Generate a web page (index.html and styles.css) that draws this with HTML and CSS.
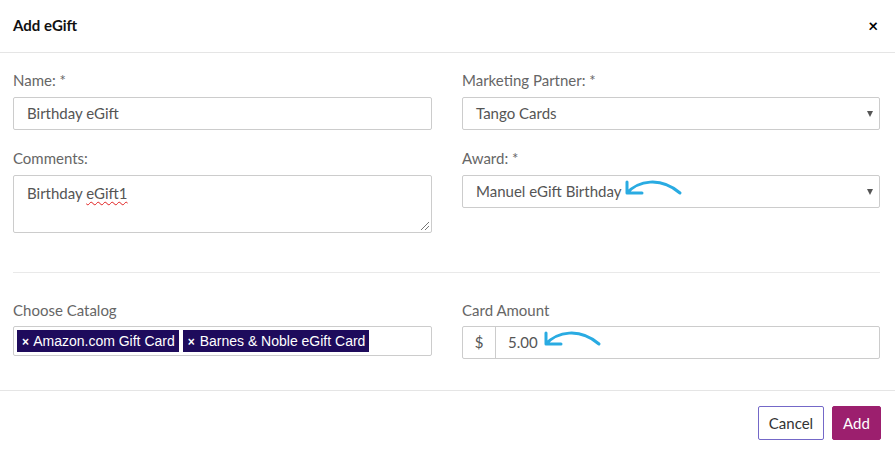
FILE: index.html
```html
<!DOCTYPE html>
<html lang="en">
<head>
  <meta charset="UTF-8" />
  <title>Add eGift</title>
  <link rel="stylesheet" href="styles.css">
</head>
<body>
  <div class="modal">
    <div class="modal-header">
      <h4>Add eGift</h4>
      <span class="close">&times;</span>
    </div>
    <div class="modal-body">
      <div class="grid">
        <div class="field">
          <label>Name: *</label>
          <div class="control">Birthday eGift</div>
        </div>
        <div class="field">
          <label>Marketing Partner: *</label>
          <div class="control select">Tango Cards</div>
        </div>
        <div class="field">
          <label>Comments:</label>
          <div class="control textarea">Birthday <span class="typo">eGift1</span></div>
        </div>
        <div class="field">
          <label>Award: *</label>
          <div class="control select">
            Manuel eGift Birthday
            <svg class="pointer award-pointer" width="60" height="22" viewBox="0 0 60 22">
              <path d="M3 4 V15 H18 M3 15 C14 3 36 -2 56 15" fill="none" stroke="#29abe2" stroke-width="3" stroke-linecap="round" stroke-linejoin="round"/>
            </svg>
          </div>
        </div>
      </div>

      <hr class="divider">

      <div class="grid">
        <div class="field narrow">
          <label>Choose Catalog</label>
          <div class="control tags">
            <span class="tag"><b>&times;</b> Amazon.com Gift Card</span>
            <span class="tag"><b>&times;</b> Barnes &amp; Noble eGift Card</span>
          </div>
        </div>
        <div class="field narrow">
          <label>Card Amount</label>
          <div class="input-group">
            <span class="addon">$</span>
            <div class="amount">
              5.00
              <svg class="pointer amount-pointer" width="60" height="22" viewBox="0 0 60 22">
                <path d="M3 4 V15 H18 M3 15 C14 3 36 -2 56 15" fill="none" stroke="#29abe2" stroke-width="3" stroke-linecap="round" stroke-linejoin="round"/>
              </svg>
            </div>
          </div>
        </div>
      </div>
    </div>
    <div class="modal-footer">
      <button class="btn btn-cancel">Cancel</button>
      <button class="btn btn-add">Add</button>
    </div>
  </div>
</body>
</html>
```

FILE: styles.css
```css
* { box-sizing: border-box; }
body {
  margin: 0;
  background: #fff;
  font-family: Lato, 'Liberation Sans', sans-serif;
  color: #555;
}
.modal {
  width: 895px;
  height: 454px;
}
.modal-header {
  height: 53px;
  border-bottom: 1px solid #e5e5e5;
  display: flex;
  align-items: center;
  justify-content: space-between;
  padding: 0 17px 2px 13px;
}
.modal-header h4 {
  margin: 0;
  font-size: 15px;
  font-weight: 700;
  color: #111;
}
.close {
  font-size: 17px;
  font-weight: 700;
  color: #000;
  line-height: 1;
}
.modal-body {
  padding: 17px 15px 31px 13px;
}
.grid {
  display: grid;
  grid-template-columns: 419px 418px;
  column-gap: 30px;
  row-gap: 18px;
  align-items: start;
}
.field label {
  display: block;
  font-size: 15px;
  line-height: 20px;
  color: #666;
  margin-bottom: 7px;
}
.field.narrow label { margin-bottom: 6px; }
.control {
  position: relative;
  height: 33px;
  border: 1px solid #ccc;
  border-radius: 2px;
  padding: 0 13px;
  font-size: 15px;
  line-height: 31px;
  color: #555;
}
.select::after {
  content: "";
  position: absolute;
  right: 6px;
  top: 13px;
  border-left: 3.5px solid transparent;
  border-right: 3.5px solid transparent;
  border-top: 6px solid #555;
}
.textarea {
  height: 58px;
  padding-top: 2px;
}
.textarea::after {
  content: "";
  position: absolute;
  right: 2px;
  bottom: 2px;
  width: 8px;
  height: 8px;
  background: linear-gradient(135deg, transparent 45%, #777 45%, #777 55%, transparent 55%, transparent 70%, #777 70%, #777 80%, transparent 80%);
}
.typo {
  text-decoration: underline wavy #e02020;
  text-decoration-thickness: 1px;
  text-underline-offset: 2px;
}
.pointer {
  position: absolute;
  top: 2px;
}
.award-pointer { left: 161px; }
.divider {
  border: 0;
  border-top: 1px solid #e9e9e9;
  margin: 39px 0 27px;
}
.tags {
  height: 30px;
  padding: 3px;
  display: flex;
  gap: 4px;
}
.tag {
  background: #1e0b5c;
  color: #fff;
  font-family: 'Liberation Sans', Arial, sans-serif;
  font-size: 14px;
  height: 22px;
  line-height: 22px;
  padding: 0 4px 0 5px;
  white-space: nowrap;
}
.tag b { font-size: 12px; margin-right: 1px; }
.input-group {
  display: flex;
  height: 33px;
  border: 1px solid #ccc;
  border-radius: 2px;
}
.addon {
  width: 33px;
  border-right: 1px solid #ccc;
  text-align: center;
  line-height: 31px;
  font-size: 15px;
  color: #555;
}
.amount {
  position: relative;
  flex: 1;
  padding-left: 12px;
  line-height: 31px;
  font-size: 15px;
  color: #555;
}
.amount-pointer { left: 47px; top: 2px; }
.modal-footer {
  border-top: 1px solid #e5e5e5;
  padding: 15px 14px 0 0;
  display: flex;
  justify-content: flex-end;
  gap: 8px;
}
.btn {
  height: 34px;
  border-radius: 2px;
  font-family: Lato, 'Liberation Sans', sans-serif;
  font-size: 15px;
  padding: 0;
}
.btn-cancel {
  width: 66px;
  background: #fff;
  color: #333;
  border: 1px solid #7468c8;
}
.btn-add {
  width: 49px;
  background: #9c1f6e;
  color: #fff;
  border: 1px solid #9c1f6e;
}
```
